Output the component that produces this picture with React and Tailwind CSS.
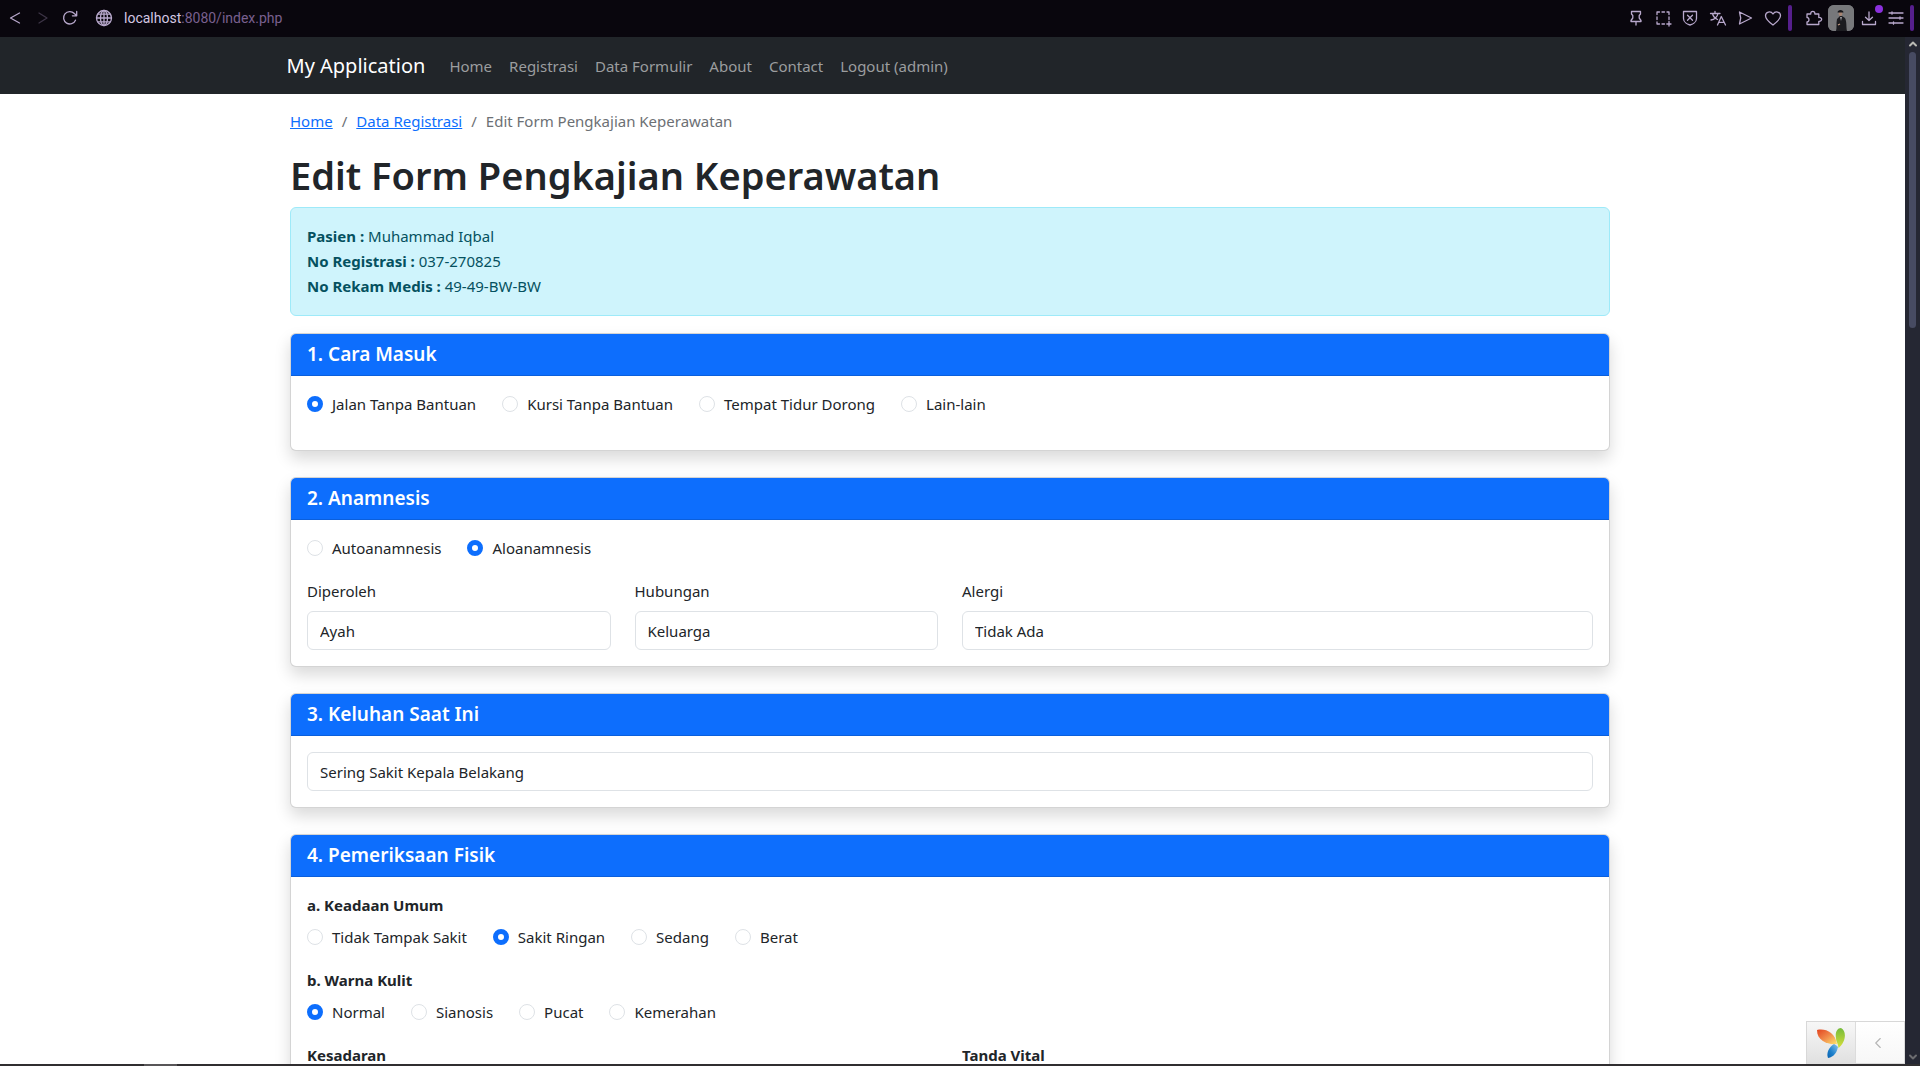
import React from "react";
import { ChevronLeft, ChevronUp, ChevronDown } from "lucide-react";

function Icon({ size = 18, children, ...rest }) {
  return (
    <svg width={size} height={size} viewBox="0 0 18 18" fill="none" stroke="currentColor" strokeWidth="1.3" strokeLinecap="round" strokeLinejoin="round" {...rest}>
      {children}
    </svg>
  );
}

function ToolButton({ label, children, className = "w-[27px]" }) {
  return (
    <button type="button" aria-label={label} className={`flex h-[26px] items-center justify-center ${className}`}>
      {children}
    </button>
  );
}

function BrowserBar() {
  return (
    <header className="flex h-[37px] shrink-0 items-center justify-between bg-[#09060d] pb-px text-[#b8a8cc]">
      <div className="flex items-center pl-[2px]">
        <ToolButton label="Back">
          <Icon><path d="M12.500 4 3.500 9l9 5" /></Icon>
        </ToolButton>
        <ToolButton label="Forward">
          <Icon className="text-[#3d3547]"><path d="M5 4l8 5-8 5" /></Icon>
        </ToolButton>
        <ToolButton label="Reload">
          <Icon><path d="M14.500 11.200A6.200 6.200 0 1 1 13.300 4.500L15.500 6.500M15.700 2.500v4.300h-4.300" /></Icon>
        </ToolButton>
        <span className="mr-[11px] ml-3">
          <Icon strokeWidth="1.3">
            <circle cx="9" cy="9" r="7.500" />
            <ellipse cx="9" cy="9" rx="3.500" ry="7.500" />
            <path d="M9 1.500v15M1.500 9h15M2.600 5.200h12.800M2.600 12.800h12.800" />
          </Icon>
        </span>
        <p className="font-['Roboto',sans-serif] text-[14px] leading-5 text-[#79608f]">
          <span className="text-[#d3c6e2]">localhost</span>:8080/index.php
        </p>
      </div>
      <div className="flex items-center">
        <ToolButton label="Pin">
          <Icon><path d="M4.500 2.500h9v2.500l-1.300 1.500v2.500l1.800 2.500v1h-10v-1l1.800-2.500v-2.500L4.500 5zM9 12.500v3.500" /></Icon>
        </ToolButton>
        <ToolButton label="Capture">
          <Icon>
            <path d="M3 5.500V3h2.500M8 3h2.500M13 3h2v2.500M15 8v2.500M3 8v2.500M3 13v2h2.500M8 15h2.500M15 12.500v4.500M12.800 15H17" />
          </Icon>
        </ToolButton>
        <ToolButton label="Blocker" className="w-[28px]">
          <Icon><path d="M2.500 2.500h13v7c0 4-4.500 6-6.500 6.500-2-.5-6.500-2.500-6.500-6.500zM6.500 6.300l5 5M11.500 6.300l-5 5" /></Icon>
        </ToolButton>
        <ToolButton label="Translate">
          <Icon><path d="M1.500 4.500h9.500M6 2.500v2M3.500 4.500c.5 2.500 3 5 5 6M9 4.500c-.5 3-3.500 6-7 6.500M8.500 16l3.800-8.500L16.500 16M9.800 13.300h5.300" /></Icon>
        </ToolButton>
        <ToolButton label="Send" className="w-[28px]">
          <Icon><path d="M3.500 3 15.500 9l-12 6 1.200-6z" /></Icon>
        </ToolButton>
        <ToolButton label="Favourite" className="w-[28px]">
          <Icon><path d="M9 16C5 13 1.500 10 1.500 6.700c0-4 5.300-5.200 7.500-1.700 2.200-3.500 7.500-2.300 7.500 1.700C16.500 10 13 13 9 16z" /></Icon>
        </ToolButton>
        <span className="ml-px mr-[9px] h-[26px] w-1 rounded-sm bg-[#561f8c]" />
        <ToolButton label="Extensions" className="w-[26px]">
          <Icon><path d="M2 5h3.800c-.7-3.500 4.700-3.500 4 0h4v3.500c3.800-.4 3.800 4.100 0 3.800V15.500H2v-2.700c2.600 0 2.600-4.300 0-4.300z" /></Icon>
        </ToolButton>
        <button type="button" aria-label="Profile" className="ml-px h-[26px] w-[26px] overflow-hidden rounded-md bg-[#747579]">
          <svg viewBox="0 0 26 26" width="26" height="26">
            <rect width="26" height="26" fill="#77787b" />
            <path d="M8 26c1-3 0-7 1-12l3-3h2l3 2c2 4 1 9 2 13z" fill="#1c1c20" />
            <ellipse cx="12.500" cy="8.500" rx="1.900" ry="2.500" fill="#a88573" />
            <path d="M9.500 7.500c0-3.500 6-3.500 6 0z" fill="#17171b" />
            <path d="M12.200 12l.8 4 .8-4z" fill="#b9b9bd" />
            <path d="M10 20l2-1" stroke="#c19a83" strokeWidth="1.300" />
          </svg>
        </button>
        <ToolButton label="Downloads" className="relative w-[29px]">
          <Icon><path d="M9 3v8.500M5.500 8.300 9 11.500l3.500-3.200M2.500 12.500V15.500h13v-3" /></Icon>
          <span className="absolute right-0 top-0 h-2 w-2 rounded-full bg-[#8b30dd]" />
        </ToolButton>
        <ToolButton label="Menu" className="w-[26px]">
          <Icon><path d="M2 4h14M2 9h14M2 14h14M5 2.800v2.400M13 7.800v2.400M6.500 12.800v2.400" /></Icon>
        </ToolButton>
        <span className="ml-px mr-[6px] h-[26px] w-1 rounded-sm bg-[#561f8c]" />
      </div>
    </header>
  );
}

const navLinks = ["Home", "Registrasi", "Data Formulir", "About", "Contact"];

function Navbar() {
  return (
    <nav className="bg-[#212529]">
      <div className="mx-auto flex h-[57px] max-w-[1332px] items-center gap-6 pt-px text-[15px] text-[#9b9d9f]">
        <a href="#home" className="text-[20px] text-white">My Application</a>
        <ul className="flex items-center gap-[17px]">
          {navLinks.map((link) => (
            <li key={link}><a href={`#${link}`}>{link}</a></li>
          ))}
          <li><button type="button">Logout (admin)</button></li>
        </ul>
      </div>
    </nav>
  );
}

function Radios({ name, options, selected }) {
  return (
    <div className="flex flex-wrap gap-x-[26px]">
      {options.map((option) => (
        <label key={option} className="flex h-6 items-center gap-[9px]">
          <input
            type="radio"
            name={name}
            defaultChecked={option === selected}
            className="h-4 w-4 appearance-none rounded-full border border-[#dee2e6] bg-white checked:border-[5px] checked:border-[#0d6efd]"
          />
          {option}
        </label>
      ))}
    </div>
  );
}

function Field({ id, label, value, className = "" }) {
  return (
    <div className={`flex flex-col gap-2 ${className}`}>
      <label htmlFor={id} className="leading-6">{label}</label>
      <TextInput id={id} value={value} />
    </div>
  );
}

function TextInput({ value, ...rest }) {
  return (
    <input
      type="text"
      defaultValue={value}
      className="h-[39px] w-full rounded-md border border-[#dee2e6] bg-white px-3 text-[#212529]"
      {...rest}
    />
  );
}

function Card({ title, className = "", children }) {
  return (
    <section className="rounded-md border border-black/17 bg-white shadow-[0_8px_16px_rgba(0,0,0,0.15)]">
      <h2 className="flex h-[42px] items-center rounded-t-[5px] border-b border-[#0b5fdb] bg-[#0d6efd] px-4 text-[19px] font-semibold text-white">
        {title}
      </h2>
      <div className={`px-4 ${className}`}>{children}</div>
    </section>
  );
}

function YiiToolbar() {
  return (
    <div className="absolute bottom-0 right-0 flex h-[43px] border-l border-t border-[#d8d8d8] bg-white">
      <a href="#debug" aria-label="Yii debugger" className="flex w-12 items-center justify-center bg-linear-to-b from-[#f7f7f7] to-[#e0e0e0]">
        <svg width="30" height="32" viewBox="0 0 30 32">
          <defs>
            <linearGradient id="yiiOrange" x1="0" y1="0" x2="1" y2="1">
              <stop offset="0" stopColor="#e2431f" />
              <stop offset="0.500" stopColor="#f08a4a" />
              <stop offset="1" stopColor="#ffe36b" />
            </linearGradient>
            <linearGradient id="yiiGreen" x1="0" y1="0" x2="0" y2="1">
              <stop offset="0" stopColor="#74bb3b" />
              <stop offset="1" stopColor="#d8df3a" />
            </linearGradient>
            <linearGradient id="yiiBlue" x1="1" y1="0" x2="0" y2="1">
              <stop offset="0" stopColor="#8cc4ec" />
              <stop offset="0.600" stopColor="#1b7fcb" />
              <stop offset="1" stopColor="#0a61ae" />
            </linearGradient>
          </defs>
          <path d="M1 3c8-2 18 2 20 14C12 18 1 14 1 3z" fill="url(#yiiOrange)" />
          <path d="M25 1c6 3 5 14-2.500 20C22 16 20 14 20 11c-1-5 1-10 5-10z" fill="url(#yiiGreen)" />
          <path d="M18 17c2 1 3 2 4 3-1 5-4 10-10 11-2-5 1-11 6-14z" fill="url(#yiiBlue)" />
        </svg>
      </a>
      <button type="button" aria-label="Expand toolbar" className="flex w-[50px] items-center justify-center border border-t-0 border-[#dcdcdc] bg-linear-to-b from-white to-[#f7f7f7] pr-1 text-[#b5b5b5]">
        <ChevronLeft size={18} strokeWidth={1.5} />
      </button>
    </div>
  );
}

function ScrollBar() {
  return (
    <div aria-hidden="true" className="flex w-[15px] shrink-0 flex-col items-center bg-[#252733]">
      <ChevronUp size={12} strokeWidth={4} className="mt-px text-[#b9b9b4]" />
      <span className="mt-[2px] h-[276px] w-[7px] rounded-full bg-[#474b62]" />
      <ChevronDown size={12} strokeWidth={4} className="mt-auto mb-px text-[#6c6c70]" />
    </div>
  );
}

export default function App() {
  return (
    <div className="flex h-screen flex-col overflow-hidden bg-white font-['Noto_Sans',sans-serif] text-[15px] text-[#212529]">
      <BrowserBar />
      <div className="flex min-h-0 flex-1">
        <div className="relative min-w-0 flex-1 overflow-hidden">
          <Navbar />
          <div className="pr-[5px]">
            <main className="mx-auto max-w-[1320px]">
              <nav aria-label="Breadcrumb" className="pt-[15px]">
                <ol className="flex gap-[9px] leading-6 text-[#6c7074]">
                  <li><a href="#home" className="text-[#0d6efd] underline">Home</a></li>
                  <li aria-hidden="true">/</li>
                  <li><a href="#registrasi" className="text-[#0d6efd] underline">Data Registrasi</a></li>
                  <li aria-hidden="true">/</li>
                  <li>Edit Form Pengkajian Keperawatan</li>
                </ol>
              </nav>
              <h1 className="mt-[18px] text-[38px] leading-[48px] font-semibold">Edit Form Pengkajian Keperawatan</h1>
              <div className="mt-2 rounded-md border border-[#9eeaf9] bg-[#cff4fc] p-4 leading-[25px] text-[#055160]">
                <p><strong>Pasien :</strong> Muhammad Iqbal</p>
                <p><strong>No Registrasi :</strong> 037-270825</p>
                <p><strong>No Rekam Medis :</strong> 49-49-BW-BW</p>
              </div>
              <form className="mt-[17px] flex flex-col gap-[26px]">
                <Card title="1. Cara Masuk" className="pt-4 pb-[34px]">
                  <Radios name="cara" selected="Jalan Tanpa Bantuan" options={["Jalan Tanpa Bantuan", "Kursi Tanpa Bantuan", "Tempat Tidur Dorong", "Lain-lain"]} />
                </Card>
                <Card title="2. Anamnesis" className="py-4">
                  <Radios name="anamnesis" selected="Aloanamnesis" options={["Autoanamnesis", "Aloanamnesis"]} />
                  <div className="mt-[19px] grid grid-cols-4 gap-6">
                    <Field id="diperoleh" label="Diperoleh" value="Ayah" />
                    <Field id="hubungan" label="Hubungan" value="Keluarga" />
                    <Field id="alergi" label="Alergi" value="Tidak Ada" className="col-span-2" />
                  </div>
                </Card>
                <Card title="3. Keluhan Saat Ini" className="py-4">
                  <TextInput aria-label="Keluhan Saat Ini" value="Sering Sakit Kepala Belakang" />
                </Card>
                <Card title="4. Pemeriksaan Fisik" className="py-4">
                  <h3 className="mb-2 leading-6 font-bold">a. Keadaan Umum</h3>
                  <Radios name="keadaan" selected="Sakit Ringan" options={["Tidak Tampak Sakit", "Sakit Ringan", "Sedang", "Berat"]} />
                  <h3 className="mt-[19px] mb-2 leading-6 font-bold">b. Warna Kulit</h3>
                  <Radios name="kulit" selected="Normal" options={["Normal", "Sianosis", "Pucat", "Kemerahan"]} />
                  <div className="mt-[19px] grid grid-cols-2 gap-6 leading-6 font-bold">
                    <h3>Kesadaran</h3>
                    <h3>Tanda Vital</h3>
                  </div>
                </Card>
              </form>
            </main>
          </div>
          <YiiToolbar />
        </div>
        <ScrollBar />
      </div>
      <div className="h-[2px] shrink-0 bg-[#302e30]">
        <div className="ml-36 h-full w-[33px] bg-[#585658]" />
      </div>
      <div className="h-[14px] shrink-0 bg-white" />
    </div>
  );
}
